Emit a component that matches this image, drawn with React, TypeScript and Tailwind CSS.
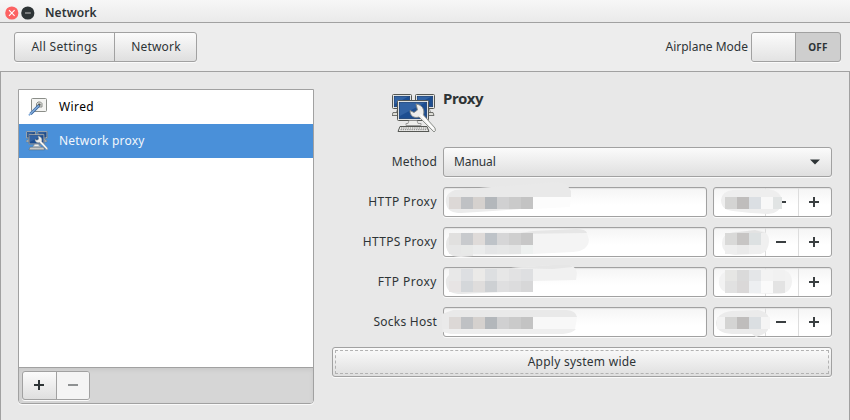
import type { ReactNode } from "react";

const raised = "border border-[#a1a1a1] bg-linear-to-b from-[#fbfbfb] to-[#dfdfdf]";

type Block = [number, number, number, number, string];
type Smudge = { shapes: [string, string][]; blocks: Block[] };

function Glyph({ plus, color = "#3a3f41" }: { plus?: boolean; color?: string }) {
  return (
    <svg width="10" height="10" viewBox="0 0 10 10" fill={color} shapeRendering="crispEdges">
      <rect x="0" y="4" width="10" height="2" />
      {plus && <rect x="4" y="0" width="2" height="10" />}
    </svg>
  );
}

function Mask({ smudge }: { smudge: Smudge }) {
  return (
    <svg className="absolute -top-px -left-px overflow-visible" width="118" height="30">
      {smudge.shapes.map(([d, fill], i) => (
        <path key={i} d={d} fill={fill} />
      ))}
      <g shapeRendering="crispEdges">
        {smudge.blocks.map(([x, y, w, h, fill], i) => (
          <rect key={i} x={x} y={y} width={w} height={h} fill={fill} />
        ))}
      </g>
    </svg>
  );
}

function row(x: number, y: number, h: number, colors: string[]): Block[] {
  return colors.map((c, i) => [x + i * 12, y, 12, h, c] as Block);
}

const strong = ["#dcd8d6", "#bfc1c4", "#d5d1ce", "#b3b7bb", "#d0d0d1", "#cacaca", "#c3c3c3"];

const rows: { label: ReactNode; host: Smudge; port: Smudge; minus: boolean; spacing: string }[] = [
  {
    label: "HTTP Proxy",
    spacing: "tracking-[0.45px]",
    minus: true,
    host: {
      shapes: [
        ["M14 3 C5 4 2 10 3 16 C4 24 10 26 18 26 L50 24 L90 21 L90 8 L18 8 Z", "#ebebeb"],
        ["M12 3 L48 0 L90 -3 L110 -5 L119 -4 Q125 -3 126 1 L128 4 L128 10 L6 10 Q7 5 12 3 Z", "#e9e9e9"],
        ["M90 10 H128 L127 20 L90 22 Z", "#fcfcfc"],
      ],
      blocks: row(6, 10, 12, strong),
    },
    port: {
      shapes: [["M20 3 L55 2 Q69 4 69 15 Q68 26 55 27 L38 26 L20 24 Q8 23 8 13 Q9 4 20 3 Z", "#eeeeee"]],
      blocks: row(12, 10, 12, ["#d4d4d3", "#bfbdbc", "#dbdfe3", "#f8f8f8"]).concat([[60, 10, 9, 12, "#e1e4e4"]]),
    },
  },
  {
    label: "HTTPS Proxy",
    spacing: "tracking-[0.3px]",
    minus: true,
    host: {
      shapes: [
        ["M14 6 C4 7 3 14 3 18 C4 27 9 29 18 29 L90 27 L130 25 Q145 24 146 13 L144 6 Q140 2 125 2 Z", "#f4f4f4"],
        ["M90 4 L133 2 Q143 2 144 6 L70 7 Z", "#e6e6e6"],
        ["M14 6 C4 7 3 14 3 18 C4 27 9 30 18 30 L30 29 L30 6 Z", "#e8e8e8"],
      ],
      blocks: [
        ...row(6, 6, 12, ["#e1e0df", "#c8cacd", "#dfdbd9", "#bec3c8", "#d6d6d7", "#cfcfcf", "#c7c7c7"]),
        ...row(6, 18, 9, ["#e7e7e7", "#e8e9e8", "#ebecec", "#e4e5e6", "#e6e7e7", "#e4e5e5", "#eef1f0"]),
      ],
    },
    port: {
      shapes: [
        ["M20 5 L46 3 Q57 5 56 15 Q55 27 45 27 L22 28 Q9 27 9 16 Q9 7 20 5 Z", "#f0f0f0"],
        ["M18 6 L42 3 L52 6 Z", "#e3e3e3"],
      ],
      blocks: row(12, 6, 12, ["#d9d9d8", "#c7c5c4", "#dde1e2"]).concat(row(12, 18, 9, ["#eeeeee", "#eaeaea", "#efefef"])),
    },
  },
  {
    label: "FTP Proxy",
    spacing: "tracking-[0.5px]",
    minus: false,
    host: {
      shapes: [
        ["M16 4 C5 6 2 11 3 17 C4 25 10 27 18 27 L85 24 L85 3 Z", "#e9e9e9"],
        ["M68 1 L110 -2 L127 -2 Q133 0 134 6 L133 13 L90 14 L88 3 Z", "#f1f1f1"],
        ["M68 1 L110 -2 L127 -2 L130 0 L110 2 Z", "#e6e6e6"],
      ],
      blocks: [
        ...row(6, 2, 12, ["#e8e8e8", "#dddfe2", "#ebeae8", "#dddfe1", "#e7e7e7", "#e2e2e3", "#dedfe1"]),
        ...row(6, 14, 11, ["#e7e4e4", "#d4d7da", "#dfdddc", "#cdd0d3", "#dfdfe0", "#dcdcdd", "#d7d7d8"]),
      ],
    },
    port: {
      shapes: [["M17 3 L66 2 Q79 3 79 15 Q78 27 65 27 L20 26 Q6 26 6 15 Q6 5 17 3 Z", "#f2f2f2"]],
      blocks: [
        ...row(12, 3, 11, ["#e6e6e4", "#dadada", "#e4e6e8", "#f3f3f3", "#f1f1f1"]),
        ...row(12, 14, 12, ["#e1e1e1", "#dad8d8", "#edeff1", "#fafafa", "#e3e3e3"]),
      ],
    },
  },
  {
    label: "Socks Host",
    spacing: "tracking-[0.25px]",
    minus: true,
    host: {
      shapes: [
        ["M10 3 L124 3 Q133 4 134 10 L-2 10 L-1 7 Z", "#e9e9e9"],
        ["M-1 10 H134 L132 22 H0 Z", "#f8f8f8"],
        ["M-1 7 L6 7 L6 26 L-1 25 Z", "#eaeaea"],
        ["M0 22 L133 22 Q130 26 120 27 L8 27 Q0 26 0 22 Z", "#eeeeee"],
      ],
      blocks: row(6, 10, 12, strong),
    },
    port: {
      shapes: [["M18 4 L45 3 Q57 5 57 16 Q56 26 48 28 L43 30 L39 27 L19 27 Q3 26 3 16 Q4 6 18 4 Z", "#ebebeb"]],
      blocks: row(12, 10, 12, ["#d4d4d3", "#bfbdbc", "#dbdfe2"]).concat([
        [4, 10, 8, 12, "#f3f3f3"],
        [48, 10, 9, 12, "#f5f5f5"],
      ]),
    },
  },
];

function Monitor({ x, y, w, h }: { x: number; y: number; w: number; h: number }) {
  return (
    <g transform={`translate(${x} ${y})`}>
      <rect x=".5" y=".5" width={w} height={h} rx="1" fill="#f4f4ef" stroke="#555753" />
      <rect x="2.3" y="2.3" width={w - 3.6} height={h - 3.6} fill="#1d4e91" stroke="#16396e" strokeWidth=".8" />
      <path d={`M2.8 2.8 H${w - 3} L2.8 ${h - 4} Z`} fill="#4778b8" opacity=".5" />
    </g>
  );
}

function ProxyIcon({ className }: { className: string }) {
  return (
    <svg viewBox="0 0 44 40" className={`shrink-0 ${className}`}>
      {[1, 24].map((x) => (
        <g key={x}>
          <path d={`M${x + 5} 14 h8 l2 5 h-12 Z`} fill="#d3d7cf" stroke="#777" strokeWidth=".7" />
          <path d={`M${x} 18.5 H${x + 17} L${x + 18} 21.5 H${x - 1} Z`} fill="#deded8" stroke="#555753" strokeWidth=".8" />
        </g>
      ))}
      <Monitor x={0} y={0} w={19} h={14} />
      <Monitor x={23} y={0} w={19} h={14} />
      <Monitor x={5} y={6} w={31} h={20} />
      <path d="M17 26.5 h8 l1 3 h3 v2 h-15 v-2 h2 Z" fill="#eeeeec" stroke="#888" strokeWidth=".8" />
      <path d="M8 32.5 H35 L37 37.5 H6 Z" fill="#eeeeec" stroke="#555753" />
      <path d="M9 34 H35 M8.5 35.7 H35.5" stroke="#777" strokeDasharray="1.4 .8" strokeWidth=".9" />
      <path
        d="M24 10 L25.5 16 L22 18.5 L18 16.5 C18 22 22 24.5 27 23 L42 38 L43.5 36.5 L43 34 L31.5 21 C33 15 30 11 24 10 Z"
        fill="#eeeeec"
        stroke="#858883"
        strokeWidth=".9"
      />
      <path d="M28.5 20.5 L41.5 35" stroke="#fff" strokeWidth="1.3" />
    </svg>
  );
}

function WiredIcon() {
  return (
    <svg width="22" height="22" viewBox="0 0 22 22" className="shrink-0">
      <rect x="4.5" y="2.5" width="15" height="13" rx="1" fill="#f4f4f2" stroke="#8b8e89" />
      <path d="M9.5 11 V7.5 L11 6 H13.5 L15 7.5 V11 Z" fill="#d8dad7" stroke="#8b8e89" />
      <circle cx="12.3" cy="8.8" r="1.3" fill="#555753" />
      <path d="M12 9.5 L3.5 18" stroke="#35649d" strokeWidth="3" />
      <path d="M12 9.5 L1.8 19.4" stroke="#80a9d8" strokeWidth="1.5" />
    </svg>
  );
}

export default function App() {
  return (
    <div className="flex h-[420px] w-[850px] flex-col overflow-hidden bg-[#ededed] font-['Noto_Sans',sans-serif] text-[12px] leading-4 text-[#2e3436]">
      <header className="flex h-[23px] shrink-0 items-center border-b border-[#a1a1a1] bg-linear-to-b from-[#f7f7f7] to-[#eaeaea] pt-[3px] pl-[5px]">
        <svg width="30" height="14" viewBox="0 0 30 14" className="mr-[10px]">
          <circle cx="6.8" cy="7" r="6.6" fill="#fc6262" />
          <path d="M4 4.2 L9.6 9.8 M9.6 4.2 L4 9.8" stroke="#fff" strokeWidth="1.1" />
          <circle cx="22.8" cy="7" r="6.6" fill="#2e3436" />
          <path d="M20 7 H25.8" stroke="#aaa" strokeWidth="1.2" />
        </svg>
        <span className="font-semibold tracking-[0.1px]">Network</span>
      </header>
      <nav className="flex h-12 shrink-0 items-center justify-between pr-[9px] pb-px pl-[14px]">
        <div className={`flex h-[30px] w-[183px] rounded-[3px] shadow-[0_1px_0_#fafafa] ${raised}`}>
          <button className="w-[100px] border-r border-[#a1a1a1] tracking-[0.3px]">All Settings</button>
          <button className="flex-1 pl-px tracking-[0.2px]">Network</button>
        </div>
        <div className="flex items-center">
          <span className="mr-[3px]">Airplane Mode</span>
          <div className="flex h-[30px] w-[90px] rounded-[3px] border border-[#a1a1a1] bg-[#cecece] shadow-[0_1px_0_#fafafa]">
            <div className="w-[44px] rounded-l-[2px] border-r border-[#a1a1a1] bg-linear-to-b from-[#fbfbfb] to-[#e3e3e3]" />
            <span className="flex-1 self-center text-center text-[10px] font-bold tracking-[0.2px]">OFF</span>
          </div>
        </div>
      </nav>
      <main className="flex flex-1 items-start border border-b-0 border-[#a1a1a1] bg-[#e8e8e8] pt-[17px] pl-[17px]">
        <aside className="flex h-[315px] w-[296px] flex-col overflow-hidden rounded-b-[4px] border border-[#a1a1a1] bg-white shadow-[0_1px_0_#fafafa]">
          <div className="flex h-[34px] shrink-0 items-center pl-[8px] text-black">
            <WiredIcon />
            <span className="ml-[10px] tracking-[0.4px]">Wired</span>
          </div>
          <div className="flex h-[34px] shrink-0 items-center bg-[#4a90d9] pl-[7px] text-[#f2f7fc]">
            <ProxyIcon className="h-5 w-[22px]" />
            <span className="ml-[11px] tracking-[0.2px]">Network proxy</span>
          </div>
          <div className="flex-1" />
          <div className="flex h-[36px] shrink-0 border-t border-[#a1a1a1] bg-[#d6d6d6] pt-[3px] pl-[3px] shadow-[inset_0_2px_4px_#c8c8c8]">
            <div className={`flex h-[29px] w-[68px] overflow-hidden rounded-[3px] shadow-[0_1px_0_#fafafa] ${raised}`}>
              <button className="flex w-[34px] items-center justify-center border-r border-[#a1a1a1] pr-px pb-px">
                <Glyph plus color="#2e3436" />
              </button>
              <button className="flex flex-1 items-center justify-center bg-[#f4f4f4] pb-px">
                <Glyph color="#8e9192" />
              </button>
            </div>
          </div>
        </aside>
        <section className="ml-[18px] w-[500px]">
          <div className="flex h-[58px] pl-[60px]">
            <ProxyIcon className="mt-[5px] h-10 w-11" />
            <h1 className="ml-[7px] text-[15px] leading-[18px] font-bold tracking-[-0.35px]">Proxy</h1>
          </div>
          <div className="flex h-10 items-start">
            <label className="w-[111px] pt-[7px] pr-[6px] text-right tracking-[0.2px]">Method</label>
            <div className={`flex h-[30px] w-[389px] items-center justify-between rounded-[3px] pr-[11px] pl-[10px] shadow-[0_1px_0_#fafafa] ${raised}`}>
              <span className="-mt-px tracking-[-0.1px]">Manual</span>
              <svg width="10" height="6" viewBox="0 0 10 6" className="-mt-px">
                <path d="M0 .5 H10 L5 5.5 Z" fill="#2e3436" />
              </svg>
            </div>
          </div>
          {rows.map((r, i) => (
            <div key={i} className="flex h-10 items-start">
              <label className={`w-[111px] pt-[7px] pr-[6px] text-right ${r.spacing}`}>{r.label}</label>
              <div className="relative h-[30px] w-[264px] rounded-[3px] border border-[#a1a1a1] bg-linear-to-b from-[#f5f5f5] to-white to-60% shadow-[0_1px_0_#fafafa,inset_0_1px_1px_#e4e4e4]">
                <Mask smudge={r.host} />
              </div>
              <div className="relative ml-[6px] flex h-[30px] w-[119px] rounded-[3px] border border-[#a1a1a1] bg-linear-to-b from-[#f5f5f5] to-white to-60% shadow-[0_1px_0_#fafafa,inset_0_1px_1px_#e4e4e4]">
                <div className="w-[51px]" />
                <div className="flex w-[33px] items-center justify-center border-l border-[#dddddd] pr-[2px]">
                  {r.minus && <Glyph />}
                </div>
                <div className="flex w-[33px] items-center justify-center border-l border-[#dddddd] pr-[2px]">
                  <Glyph plus />
                </div>
                <Mask smudge={r.port} />
              </div>
            </div>
          ))}
          <button className={`block h-[30px] w-full rounded-[3px] p-[2px] shadow-[0_1px_0_#fafafa] ${raised}`}>
            <span className="flex h-full items-center justify-center border border-dashed border-[#b2b2b2] tracking-[0.25px]">
              Apply system wide
            </span>
          </button>
        </section>
      </main>
    </div>
  );
}
